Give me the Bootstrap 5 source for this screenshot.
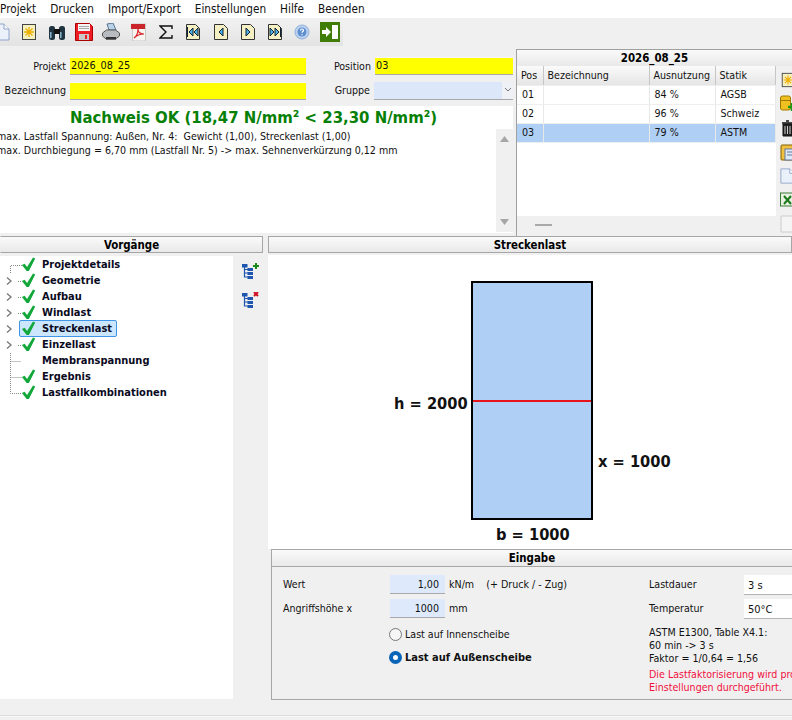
<!DOCTYPE html>
<html lang="de">
<head>
  <meta charset="UTF-8" />
  <title>Streckenlast</title>
  <link href="https://cdn.jsdelivr.net/npm/bootstrap@5.3.3/dist/css/bootstrap.min.css" rel="stylesheet">
  <style>
    html, body { height: 720px; overflow: hidden; }
    body { font-family: "DejaVu Sans Condensed", "Liberation Sans", sans-serif; font-size: 10.6px; line-height: 1.2; background: #f0f0f0; color: #111; width: 792px; }
    .app-menu { height: 18px; background: #fff; font-size: 11.7px; gap: 14px; align-items: center; }
    .app-menu span { line-height: 18px; }
    .tool-row { height: 28px; width: 343px; padding-top: 4px; background: linear-gradient(#f2f2f2, #e3e3e3); overflow: hidden; }
    .tool-strip { margin-left: -11.5px; }
    .tool-slot { width: 27.3px; height: 20px; display: flex; justify-content: center; align-items: center; flex: none; }
    .top-zone { height: 189px; }
    .left-zone { width: 516px; padding-top: 8px; }
    .field-row { height: 24px; align-items: center; }
    .field-row-b { height: 25px; }
    .field-lbl { text-align: right; padding-right: 4px; }
    .yellow-box { background: #ff0; height: 18px; border-top: 1px solid #f6f6f6; border-bottom: 1px solid #a8a8a8; padding: 0 1px; font-size: 10.8px; line-height: 16px; }
    .group-box { background: linear-gradient(90deg, #dce8fa 92%, #eef1f5 92%); height: 18px; border-bottom: 1px solid #a8a8a8; width: 139px; position: relative; }
    .group-box svg { position: absolute; right: 1px; top: 5px; }
    .result-box { height: 127px; width: 513px; background: #fff; margin-top: 3px; }
    .result-title { color: #078007; font: bold 16.6px/20px "DejaVu Sans Condensed", "DejaVu Sans", sans-serif; text-align: center; padding: 2px 6px 0 0; height: 23px; }
    .result-text { margin-left: -3px; line-height: 14px; width: 499px; flex: none; white-space: nowrap; }
    .scroll-lane { width: 17px; background: #f0f0f0; height: 103px; justify-content: space-between; align-items: center; display: flex; flex-direction: column; padding: 7px 0; }
    .pos-panel { width: 276px; height: 187px; margin-top: 3px; border-left: 1px solid #a0a0a0; border-top: 1px solid #a0a0a0; }
    .grad-head { background: linear-gradient(#fafafa, #e9e9e9); font: bold 11.4px "DejaVu Sans Condensed", "DejaVu Sans", sans-serif; text-align: center; color: #000; }
    .pos-title { height: 16px; line-height: 17px; }
    .pos-table-wrap { width: 259px; height: 150px; background: #fff; }
    .pos-table { table-layout: fixed; width: 259px; margin: 0; font-size: 10.6px; border-collapse: collapse; }
    .pos-table th, .pos-table td { padding: 0 0 0 5px; height: 19px; border-right: 1px solid #e8e8e8; border-bottom: 1px solid #eee; font-weight: normal; vertical-align: middle; color: #111; white-space: nowrap; overflow: hidden; background: transparent; box-shadow: none; }
    .pos-table th { background: linear-gradient(#fafafa, #e5e5e5); border-right-color: #c6c6c6; padding-left: 4px; }
    .pos-table .row-on td { background: #b0cff5; }
    .side-tools { width: 16px; overflow: hidden; padding-top: 5px; }
    .side-tools svg { display: block; margin: 0 0 6px 4px; }
    .hscroll-lane { height: 19px; width: 259px; padding: 8px 0 0 18px; }
    .hscroll-lane i { display: block; width: 17px; height: 2px; background: #a9a9a9; }
    .lower-zone { height: 472px; margin-top: 1px; gap: 5px; }
    .tree-side { width: 263px; }
    .pane-head { height: 17px; line-height: 16px; border: 1px solid #a6a6a6; border-left-color: transparent; }
    .tree-body { height: 443px; margin-top: 3px; }
    .tree-white { width: 233px; background: #fff; padding-top: 1px; }
    .tree-row { height: 16px; align-items: center; font: bold 11px/16px "DejaVu Sans Condensed", "DejaVu Sans", sans-serif; color: #0a0a1e; }
    .tree-row svg { flex: none; }
    .tree-name { padding: 0 2px; }
    .tree-on { position: relative; }
    .tree-on::before { content: ""; position: absolute; left: 19px; top: -1px; width: 98px; height: 17px; background: #cbe6fd; border: 1px solid #3f96e6; border-radius: 2px; }
    .tree-on svg, .tree-on .tree-name { position: relative; }
    .tree-tools { width: 30px; padding: 7px 0 0 9px; }
    .tree-tools svg { display: block; margin-bottom: 13px; }
    .main-side { width: 524px; flex: none; }
    .pane-head2 { border-right-color: #a6a6a6; border-left-color: #a6a6a6; }
    .draw-canvas { position: relative; height: 294px; background: #fff; margin-top: 2px; font: bold 16.3px/20px "DejaVu Sans Condensed", "DejaVu Sans", sans-serif; color: #111; }
    .glass-rect { position: absolute; left: 203px; top: 26px; width: 122px; height: 239px; background: #b0cff5; border: 2px solid #000; }
    .load-line { position: absolute; left: 0; right: 0; top: 117px; height: 2px; background: #e8121c; }
    .dim-h { position: absolute; left: 126px; top: 139px; }
    .dim-x { position: absolute; left: 330px; top: 197px; }
    .dim-b { position: absolute; left: 228px; top: 270px; }
    .input-group-box { margin: 0 0 0 3px; height: 151px; border: 1px solid #a6a6a6; border-right: 0; }
    .input-head { height: 17px; line-height: 17px; border-bottom: 1px solid #a6a6a6; }
    .input-body { padding: 8px 0 0 11px; }
    .in-col-a { width: 107px; }
    .in-row { height: 24px; align-items: flex-start; }
    .in-row span { line-height: 18px; }
    .num-box { width: 55px; height: 19px; background: #deeafb; border-bottom: 1px solid #a8a8a8; text-align: right; padding-right: 6px; line-height: 18px; margin-right: 4px; }
    .radio-row { height: 23px; align-items: center; margin-left: 106px; gap: 3px; }
    .radio-row b { font: bold 11px "DejaVu Sans Condensed", "DejaVu Sans", sans-serif; color: #111; }
    .right-form { width: 150px; flex: none; }
    .drop-box { width: 50px; height: 20px; background: #fff; border-bottom: 1px solid #b5b5b5; padding-left: 4px; line-height: 21px; font-size: 11px; margin-left: 45px; }
    .in-lbl-b { width: 50px; white-space: nowrap; }
    .note-text { line-height: 13.2px; margin-top: 3px; white-space: nowrap; }
    .note-red { color: #f01040; line-height: 13.2px; margin-top: 2px; white-space: nowrap; }
    .status-strip { height: 12px; margin-top: 7px; border-top: 1px solid #dcdcdc; box-shadow: inset 0 1px 0 #f8f8f8; }
  </style>
</head>
<body>
  <svg width="0" height="0" class="d-none">
    <symbol id="tick" viewBox="0 0 16 16"><path d="M1 8.500l2.800-1.200 2.700 3.400L12.800 0.500l2.400 1-6.800 13.500H6z" fill="#14a83c"/></symbol>
    <symbol id="page" viewBox="0 0 18 18"><path d="M1 1h10l5 5v11H1z" fill="#eaf1fb" stroke="#8fa3c8"/><path d="M11 1v5h5" fill="#fff" stroke="#8fa3c8"/></symbol>
    <symbol id="star-page" viewBox="0 0 18 18"><rect x="2.500" y="1.500" width="13" height="15" fill="#f6efc0" stroke="#444"/><path d="M4 9h10M9 4v10M5.500 5.500l7 7M12.500 5.500l-7 7" stroke="#eeb000" stroke-width="1.300"/></symbol>
    <symbol id="nav-doc" viewBox="0 0 16 18"><path d="M1.500 1.500h9l4 4v11h-13z" fill="#f5f0c4" stroke="#333"/></symbol>
    <symbol id="tree-base" viewBox="0 0 18 16"><path d="M2.500 3v11H6M2.500 6.500H6M2.500 10H6" fill="none" stroke="#1f56b0" stroke-width="1.200"/><rect x="0" y="1" width="5.500" height="3.500" fill="#1f56b0"/><rect x="5.500" y="5" width="5.500" height="3" fill="#1f56b0"/><rect x="5.500" y="9" width="5.500" height="3" fill="#1f56b0"/><rect x="5.500" y="13" width="5.500" height="3" fill="#1f56b0"/></symbol>
  </svg>

  <div class="app-menu d-flex">
    <span>Projekt</span><span>Drucken</span><span>Import/Export</span><span>Einstellungen</span><span>Hilfe</span><span>Beenden</span>
  </div>

  <div class="tool-row">
    <div class="tool-strip d-flex">
      <div class="tool-slot"><svg width="18" height="18"><use href="#page"/></svg></div>
      <div class="tool-slot"><svg width="18" height="18"><use href="#star-page"/></svg></div>
      <div class="tool-slot"><svg width="18" height="18" viewBox="0 0 18 18"><rect x="1" y="3" width="6" height="14" rx="2.500" fill="#1f3440"/><rect x="11" y="3" width="6" height="14" rx="2.500" fill="#1f3440"/><rect x="6" y="6" width="6" height="5" fill="#111"/><path d="M2.800 9v6M12.800 9v6" stroke="#8fc0d8" stroke-width="1.400"/></svg></div>
      <div class="tool-slot"><svg width="18" height="18" viewBox="0 0 18 18"><path d="M0.500 0.500h14l3 3v14H0.500z" fill="#ee1c25" stroke="#a00"/><rect x="3" y="1" width="12" height="7" fill="#f4f4f4"/><path d="M4 3.500h10M4 5.500h10" stroke="#aaa"/><rect x="4" y="11" width="10" height="6" fill="#c9c9c9"/><rect x="10" y="12" width="2" height="4" fill="#ee1c25"/></svg></div>
      <div class="tool-slot"><svg width="18" height="18" viewBox="0 0 18 18"><path d="M5 1l6-1 3 7H7z" fill="#b9d4ea" stroke="#5a7590"/><path d="M0.500 10l4-3h9l4 3v3l-4 3H4l-3.500-3z" fill="#b8bcc0" stroke="#555"/><path d="M4 14h10v2.500H4z" fill="#333"/></svg></div>
      <div class="tool-slot"><svg width="18" height="18" viewBox="0 0 18 18"><rect x="2.500" y="1" width="13" height="17" fill="#f8f4f0" stroke="#c9c9c9"/><rect x="1" y="1" width="14" height="5" fill="#c9262c"/><path d="M4 15c3-2 4-6 4-9 0 3 2 5 6 5-4 0-7 1-10 4z" fill="none" stroke="#d8232a" stroke-width="1.200"/></svg></div>
      <div class="tool-slot"><svg width="14" height="14" viewBox="0 0 14 14"><path d="M13 4V1H1l6 6-6 6h12v-3" fill="none" stroke="#111" stroke-width="1.400"/></svg></div>
      <div class="tool-slot"><svg width="16" height="18" viewBox="0 0 16 18"><use href="#nav-doc"/><path d="M8 5v8L4 9zM13 5v8L9 9z" fill="#4fb0e8" stroke="#123"/><path d="M2.500 4v10" stroke="#123"/></svg></div>
      <div class="tool-slot"><svg width="16" height="18" viewBox="0 0 16 18"><use href="#nav-doc"/><path d="M10 5v8L6 9z" fill="#4fb0e8" stroke="#123"/></svg></div>
      <div class="tool-slot"><svg width="16" height="18" viewBox="0 0 16 18"><use href="#nav-doc"/><path d="M6 5v8l4-4z" fill="#4fb0e8" stroke="#123"/></svg></div>
      <div class="tool-slot"><svg width="16" height="18" viewBox="0 0 16 18"><use href="#nav-doc"/><path d="M3 5v8l4-4zM8 5v8l4-4z" fill="#4fb0e8" stroke="#123"/><path d="M13.500 4v10" stroke="#123"/></svg></div>
      <div class="tool-slot"><svg width="16" height="16" viewBox="0 0 16 16"><circle cx="8" cy="8" r="7" fill="#bcd2ee" stroke="#8fb0dc"/><circle cx="8" cy="8" r="4.500" fill="#5d8fd0"/><path d="M6.500 6.500c0-2 3-2 3 0 0 1-1.500 1-1.500 2.200M8 10.300v1" fill="none" stroke="#fff" stroke-width="1.200"/></svg></div>
      <div class="tool-slot"><svg width="20" height="20" viewBox="0 0 20 20"><rect width="20" height="20" fill="#3f7d06"/><rect x="12" y="3" width="6" height="14" fill="#fff"/><path d="M2 8h4V5l5 5-5 5v-3H2z" fill="#fff"/></svg></div>
    </div>
  </div>

  <div class="top-zone d-flex">
    <div class="left-zone">
      <div class="field-row d-flex">
        <div class="field-lbl" style="width:70px">Projekt</div>
        <div class="yellow-box" style="width:236px">2026_08_25</div>
        <div class="field-lbl" style="width:69px">Position</div>
        <div class="yellow-box" style="width:138px">03</div>
      </div>
      <div class="field-row field-row-b d-flex">
        <div class="field-lbl" style="width:70px">Bezeichnung</div>
        <div class="yellow-box" style="width:236px"></div>
        <div class="field-lbl" style="width:68px">Gruppe</div>
        <div class="group-box"><svg width="8" height="6"><path d="M1 1l3 3 3-3" fill="none" stroke="#777"/></svg></div>
      </div>
      <div class="result-box">
        <div class="result-title">Nachweis OK (18,47 N/mm² &lt; 23,30 N/mm²)</div>
        <div class="d-flex">
          <div class="result-text">max. Lastfall Spannung: Außen, Nr. 4:&nbsp; Gewicht (1,00), Streckenlast (1,00)<br>max. Durchbiegung = 6,70 mm (Lastfall Nr. 5) -&gt; max. Sehnenverkürzung 0,12 mm</div>
          <div class="scroll-lane">
            <svg width="9" height="6"><path d="M4.500 0l4.500 6H0z" fill="#a6a6a6"/></svg>
            <svg width="9" height="6"><path d="M0 0h9L4.500 6z" fill="#a6a6a6"/></svg>
          </div>
        </div>
      </div>
    </div>
    <div class="pos-panel">
      <div class="grad-head pos-title">2026_08_25</div>
      <div class="d-flex">
        <div>
          <div class="pos-table-wrap">
            <table class="table pos-table">
              <colgroup><col style="width:26px"><col style="width:106px"><col style="width:66px"><col></colgroup>
              <thead><tr><th>Pos</th><th>Bezeichnung</th><th>Ausnutzung</th><th>Statik</th></tr></thead>
              <tbody>
                <tr><td>01</td><td></td><td>84 %</td><td>AGSB</td></tr>
                <tr><td>02</td><td></td><td>96 %</td><td>Schweiz</td></tr>
                <tr class="row-on"><td>03</td><td></td><td>79 %</td><td>ASTM</td></tr>
              </tbody>
            </table>
          </div>
          <div class="hscroll-lane"><i></i></div>
        </div>
        <div class="side-tools">
          <svg width="16" height="18" viewBox="0 0 18 18"><use href="#star-page"/></svg>
          <svg width="16" height="18" viewBox="0 0 16 18"><rect x="0.500" y="1" width="10" height="14" rx="2" fill="#f0c020" stroke="#a07800"/><path d="M0.500 5.500h10" stroke="#a07800"/><path d="M8 12h8M12 8v8" stroke="#1a9a1a" stroke-width="2.500"/></svg>
          <svg width="16" height="18" viewBox="0 0 16 18"><path d="M2 4h11M6 2h3" stroke="#111" stroke-width="1.500"/><path d="M3 5h9v12H3z" fill="#222" stroke="#111"/><path d="M5 7v8M7.500 7v8M10 7v8" stroke="#ccc"/></svg>
          <svg width="16" height="18" viewBox="0 0 16 18"><rect x="1" y="2" width="12" height="15" rx="1" fill="#f0c040" stroke="#806000"/><rect x="5" y="6" width="11" height="11" fill="#dfe8f5" stroke="#6078a0"/><path d="M7 9h8M7 12h8" stroke="#6078a0"/></svg>
          <svg width="16" height="18" viewBox="0 0 18 18"><use href="#page"/></svg>
          <svg width="16" height="18" viewBox="0 0 16 18"><rect x="0.500" y="2" width="15" height="13" fill="#e8f0e0" stroke="#3a7a3a"/><path d="M4 5l7 8M11 5l-7 8" stroke="#1a7a1a" stroke-width="2"/></svg>
          <svg width="16" height="18" viewBox="0 0 16 18"><path d="M1 1h14v16H1z" fill="#f4f4f4" stroke="#ccc"/></svg>
        </div>
      </div>
    </div>
  </div>

  <div class="lower-zone d-flex">
    <div class="tree-side">
      <div class="grad-head pane-head">Vorgänge</div>
      <div class="tree-body d-flex">
        <div class="tree-white">
          <div class="tree-row d-flex"><svg width="40" height="16"><path d="M10.500 16V8.500H22" stroke="#888" stroke-dasharray="1 1" fill="none"/><use href="#tick" x="21" y="0" width="15" height="15"/></svg><span class="tree-name">Projektdetails</span></div>
          <div class="tree-row d-flex"><svg width="40" height="16"><path d="M7 4.500l4 3.500-4 3.500" stroke="#777" stroke-width="1.300" fill="none"/><path d="M18 8.500h4" stroke="#888" stroke-dasharray="1 1"/><use href="#tick" x="21" y="0" width="15" height="15"/></svg><span class="tree-name">Geometrie</span></div>
          <div class="tree-row d-flex"><svg width="40" height="16"><path d="M7 4.500l4 3.500-4 3.500" stroke="#777" stroke-width="1.300" fill="none"/><path d="M18 8.500h4" stroke="#888" stroke-dasharray="1 1"/><use href="#tick" x="21" y="0" width="15" height="15"/></svg><span class="tree-name">Aufbau</span></div>
          <div class="tree-row d-flex"><svg width="40" height="16"><path d="M7 4.500l4 3.500-4 3.500" stroke="#777" stroke-width="1.300" fill="none"/><path d="M18 8.500h4" stroke="#888" stroke-dasharray="1 1"/><use href="#tick" x="21" y="0" width="15" height="15"/></svg><span class="tree-name">Windlast</span></div>
          <div class="tree-row tree-on d-flex"><svg width="40" height="16"><path d="M7 4.500l4 3.500-4 3.500" stroke="#777" stroke-width="1.300" fill="none"/><use href="#tick" x="21" y="0" width="15" height="15"/></svg><span class="tree-name">Streckenlast</span></div>
          <div class="tree-row d-flex"><svg width="40" height="16"><path d="M7 4.500l4 3.500-4 3.500" stroke="#777" stroke-width="1.300" fill="none"/><path d="M18 8.500h4" stroke="#888" stroke-dasharray="1 1"/><use href="#tick" x="21" y="0" width="15" height="15"/></svg><span class="tree-name">Einzellast</span></div>
          <div class="tree-row d-flex"><svg width="40" height="16"><path d="M10.500 0v16M10.500 8.500H21" stroke="#888" stroke-dasharray="1 1" fill="none"/></svg><span class="tree-name">Membranspannung</span></div>
          <div class="tree-row d-flex"><svg width="40" height="16"><path d="M10.500 0v16M10.500 8.500H22" stroke="#888" stroke-dasharray="1 1" fill="none"/><use href="#tick" x="21" y="0" width="15" height="15"/></svg><span class="tree-name">Ergebnis</span></div>
          <div class="tree-row d-flex"><svg width="40" height="16"><path d="M10.500 0v8.500H22" stroke="#888" stroke-dasharray="1 1" fill="none"/><use href="#tick" x="21" y="0" width="15" height="15"/></svg><span class="tree-name">Lastfallkombinationen</span></div>
        </div>
        <div class="tree-tools">
          <svg width="18" height="16" viewBox="0 0 18 16"><use href="#tree-base"/><path d="M11 3h6M14 0v6" stroke="#178a17" stroke-width="2"/></svg>
          <svg width="18" height="16" viewBox="0 0 18 16"><use href="#tree-base"/><path d="M12 0l4 4M16 0l-4 4" stroke="#d01020" stroke-width="2"/></svg>
        </div>
      </div>
    </div>

    <div class="main-side">
      <div class="grad-head pane-head pane-head2">Streckenlast</div>
      <div class="draw-canvas">
        <div class="glass-rect"><div class="load-line"></div></div>
        <div class="dim-h">h = 2000</div>
        <div class="dim-x">x = 1000</div>
        <div class="dim-b">b = 1000</div>
      </div>
      <div class="input-group-box">
        <div class="grad-head input-head">Eingabe</div>
        <div class="input-body d-flex">
          <div style="width:366px;flex:none">
            <div class="in-row d-flex"><span class="in-col-a">Wert</span><div class="num-box">1,00</div><span>kN/m</span><span class="ms-2 ps-1">(+ Druck / - Zug)</span></div>
            <div class="in-row d-flex"><span class="in-col-a">Angriffshöhe x</span><div class="num-box">1000</div><span>mm</span></div>
            <div class="radio-row d-flex"><svg width="13" height="13"><circle cx="6.500" cy="6.500" r="6" fill="#f6f6f6" stroke="#777"/></svg><span>Last auf Innenscheibe</span></div>
            <div class="radio-row d-flex"><svg width="13" height="13"><circle cx="6.500" cy="6.500" r="4.500" fill="#fff" stroke="#0a64b8" stroke-width="4"/></svg><b>Last auf Außenscheibe</b></div>
          </div>
          <div class="right-form">
            <div class="in-row d-flex"><span class="in-lbl-b">Lastdauer</span><div class="drop-box">3 s</div></div>
            <div class="in-row d-flex"><span class="in-lbl-b">Temperatur</span><div class="drop-box">50°C</div></div>
            <div class="note-text">ASTM E1300, Table X4.1:<br>60 min -&gt; 3 s<br>Faktor = 1/0,64 = 1,56</div>
            <div class="note-red">Die Lastfaktorisierung wird pro<br>Einstellungen durchgeführt.</div>
          </div>
        </div>
      </div>
    </div>
  </div>
  <div class="status-strip"></div>
</body>
</html>
